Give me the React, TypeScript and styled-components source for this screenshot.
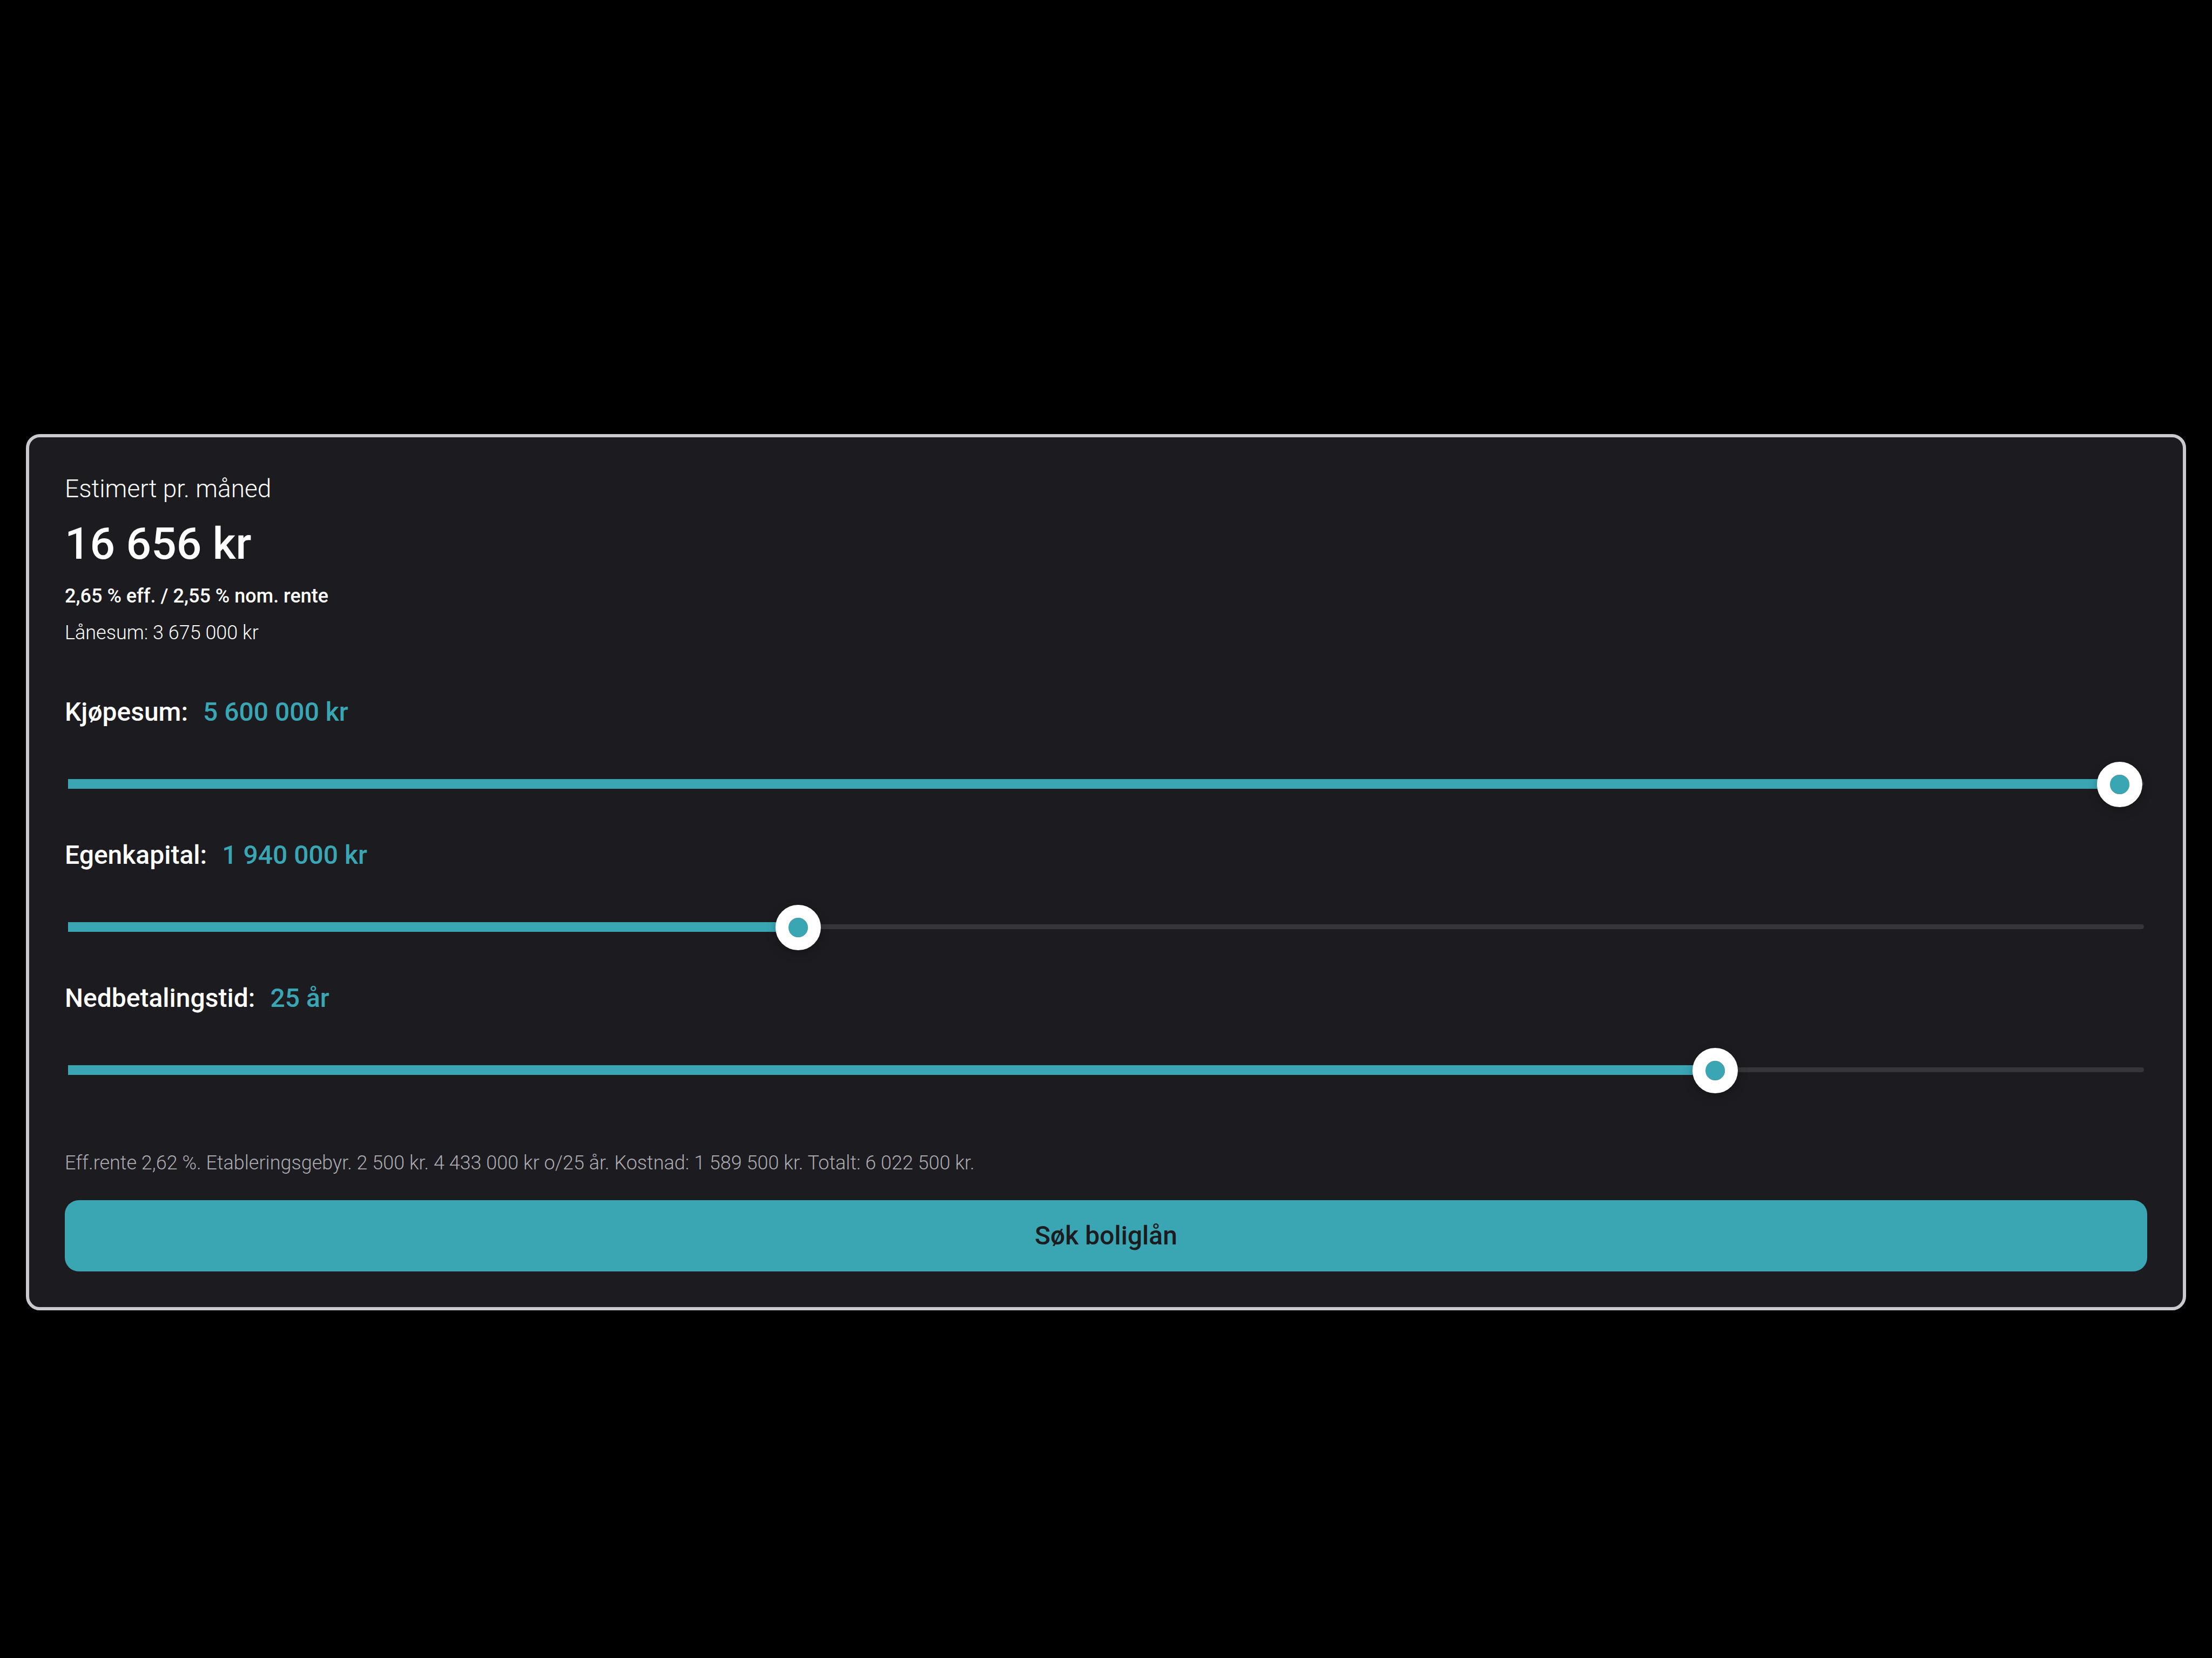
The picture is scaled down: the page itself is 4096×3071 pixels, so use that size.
import React, { useId, useState } from "react";
import styled, { createGlobalStyle } from "styled-components";

const color = {
  page: "#000000",
  card: "#1c1b1f",
  border: "#c9c9cf",
  accent: "#3aa6b4",
  track: "#363539",
  text: "#ffffff",
  muted: "#acabb2",
};

const THUMB = 84;

const GlobalStyle = createGlobalStyle`
  *, *::before, *::after { box-sizing: border-box; }
  body {
    margin: 0;
    background: ${color.page};
    color: ${color.text};
    font-family: Roboto, "Liberation Sans", sans-serif;
    font-size: 36px;
    line-height: 48px;
  }
`;

const Page = styled.main`
  padding: 804px 48px 0;
`;

const Card = styled.form`
  display: flex;
  flex-direction: column;
  padding: 66px;
  background: ${color.card};
  border: 6px solid ${color.border};
  border-radius: 26px;
`;

const Summary = styled.header`
  display: flex;
  flex-direction: column;
  gap: 20px;
`;

const Caption = styled.p`
  margin: 0;
  font-size: 46px;
  font-weight: 300;
  line-height: 58px;
`;

const Amount = styled.h1`
  margin: 0;
  font-size: 82px;
  font-weight: 500;
  line-height: 106px;
`;

const Detail = styled.p<{ $strong?: boolean }>`
  margin: 0;
  font-weight: ${(p) => (p.$strong ? 500 : 300)};
`;

const Fields = styled.section`
  display: flex;
  flex-direction: column;
  gap: 58px;
  margin-top: 91px;
`;

const Field = styled.div`
  display: flex;
  flex-direction: column;
  gap: 59px;
`;

const FieldHead = styled.div`
  display: flex;
  gap: 28px;
  font-size: 48px;
  font-weight: 500;
  line-height: 64px;
`;

const FieldValue = styled.output`
  color: ${color.accent};
`;

const SliderBox = styled.div`
  display: grid;
  margin: 0 6px;

  &::before {
    content: "";
    grid-area: 1 / 1;
    height: 9px;
    margin-top: 37px;
    background: ${color.track};
    border-radius: 5px;
  }
`;

const Slider = styled.input`
  grid-area: 1 / 1;
  appearance: none;
  width: 100%;
  height: ${THUMB}px;
  margin: 0;
  background: transparent;
  cursor: pointer;

  &::-webkit-slider-runnable-track {
    height: 18px;
    background: linear-gradient(${color.accent}, ${color.accent}) 0 0 / var(--fill) 100% no-repeat;
  }

  &::-webkit-slider-thumb {
    appearance: none;
    width: ${THUMB}px;
    height: ${THUMB}px;
    margin-top: -32px;
    background: ${color.accent};
    background-clip: padding-box;
    border: 24px solid #ffffff;
    border-radius: 50%;
    box-shadow: 0 6px 18px rgba(0, 0, 0, 0.25);
  }
`;

const Terms = styled.p`
  margin: 106px 0 0;
  color: ${color.muted};
  font-weight: 300;
`;

const Submit = styled.button`
  height: 132px;
  margin-top: 45px;
  padding: 0;
  border: 0;
  border-radius: 26px;
  background: ${color.accent};
  color: ${color.card};
  font: inherit;
  font-size: 48px;
  font-weight: 500;
  cursor: pointer;
`;

const grouped = (n: number) => String(n).replace(/\B(?=(\d{3})+$)/g, "\u00a0");
const kroner = (n: number) => `${grouped(n)} kr`;
const years = (n: number) => `${n} år`;

type RangeFieldProps = {
  label: string;
  min: number;
  max: number;
  step: number;
  initial: number;
  format: (n: number) => string;
};

function RangeField({ label, min, max, step, initial, format }: RangeFieldProps) {
  const id = useId();
  const [value, setValue] = useState(initial);
  const ratio = (value - min) / (max - min);
  const fill = `calc(${THUMB / 2}px + (100% - ${THUMB}px) * ${ratio})`;

  return (
    <Field>
      <FieldHead>
        <label htmlFor={id}>{label}</label>
        <FieldValue htmlFor={id}>{format(value)}</FieldValue>
      </FieldHead>
      <SliderBox>
        <Slider
          id={id}
          type="range"
          min={min}
          max={max}
          step={step}
          value={value}
          onChange={(e) => setValue(Number(e.target.value))}
          style={{ "--fill": fill } as React.CSSProperties}
        />
      </SliderBox>
    </Field>
  );
}

export default function App() {
  return (
    <>
      <GlobalStyle />
      <Page>
        <Card onSubmit={(e) => e.preventDefault()}>
          <Summary>
            <Caption>Estimert pr. måned</Caption>
            <Amount>{kroner(16656)}</Amount>
            <Detail $strong>2,65 % eff. / 2,55 % nom. rente</Detail>
            <Detail>Lånesum: {kroner(3675000)}</Detail>
          </Summary>
          <Fields>
            <RangeField label="Kjøpesum:" min={0} max={5604000} step={1000} initial={5600000} format={kroner} />
            <RangeField label="Egenkapital:" min={0} max={5567000} step={1000} initial={1940000} format={kroner} />
            <RangeField label="Nedbetalingstid:" min={5} max={30} step={1} initial={25} format={years} />
          </Fields>
          <Terms>
            Eff.rente 2,62 %. Etableringsgebyr. 2 500 kr. 4 433 000 kr o/25 år. Kostnad: 1 589 500 kr. Totalt: 6 022 500 kr.
          </Terms>
          <Submit type="submit">Søk boliglån</Submit>
        </Card>
      </Page>
    </>
  );
}
